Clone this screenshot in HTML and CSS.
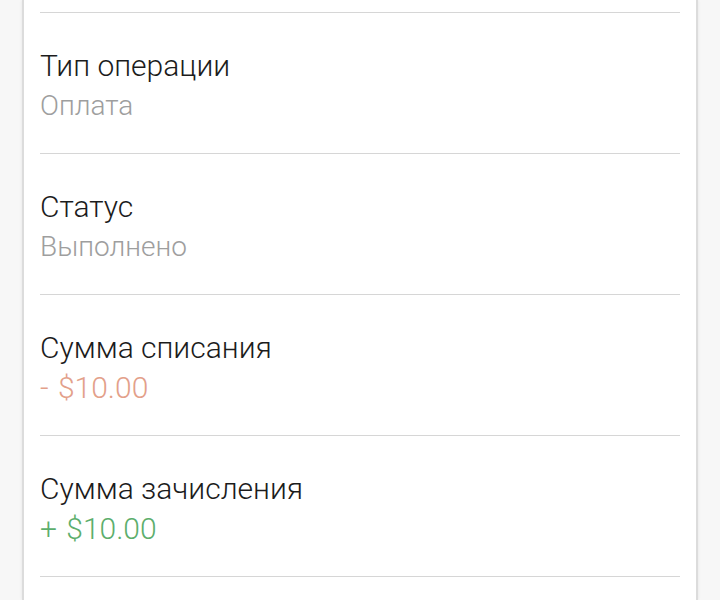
FILE: index.html
```html
<!DOCTYPE html>
<html lang="ru">

<head>
    <meta charset="UTF-8">
    <meta name="viewport" content="width=device-width, initial-scale=1.0">
    <title>Операция</title>
    <link rel="stylesheet" href="styles.css">
</head>

<body>

    <!-- Operation details card -->
    <div class="card">
        <div class="row row-top"></div>

        <div class="row">
            <div class="label">Тип операции</div>
            <div class="value">Оплата</div>
        </div>

        <div class="row">
            <div class="label">Статус</div>
            <div class="value">Выполнено</div>
        </div>

        <div class="row">
            <div class="label">Сумма списания</div>
            <div class="value amount value-minus">- $10.00</div>
        </div>

        <div class="row">
            <div class="label">Сумма зачисления</div>
            <div class="value amount value-plus">+ $10.00</div>
        </div>

        <div class="row row-tail"></div>
    </div>

</body>

</html>
```

FILE: styles.css
```css
/* Page background */
body {
    margin: 0;
    background: #f7f7f7;
    font-family: 'Roboto', 'Noto Sans', sans-serif;
    height: 600px;
    overflow: hidden;
}

/* White card with soft edges */
.card {
    margin: 0 22px;
    padding: 0 16px;
    background: #fff;
    border-left: 2px solid #dcdcdc;
    border-right: 2px solid #dcdcdc;
    box-shadow: 0 0 3px rgba(0, 0, 0, 0.08);
    height: 600px;
}

.row {
    border-bottom: 1px solid #d6d6d6;
    padding: 33px 0 27px;
    height: 80px;
}

.row-top {
    height: 12px;
    padding: 0;
}

.row-tail {
    border-bottom: none;
}

.label {
    font-size: 30px;
    font-weight: 300;
    line-height: 40px;
    color: #1c1c1c;
}

.value {
    font-size: 28px;
    font-weight: 300;
    line-height: 40px;
    color: #9e9e9e;
}

/* Money amounts are a bit larger */
.amount {
    font-size: 30px;
    word-spacing: 2px;
}

.value-minus {
    color: #e3a08a;
}

.value-plus {
    color: #5cae6c;
}
```
